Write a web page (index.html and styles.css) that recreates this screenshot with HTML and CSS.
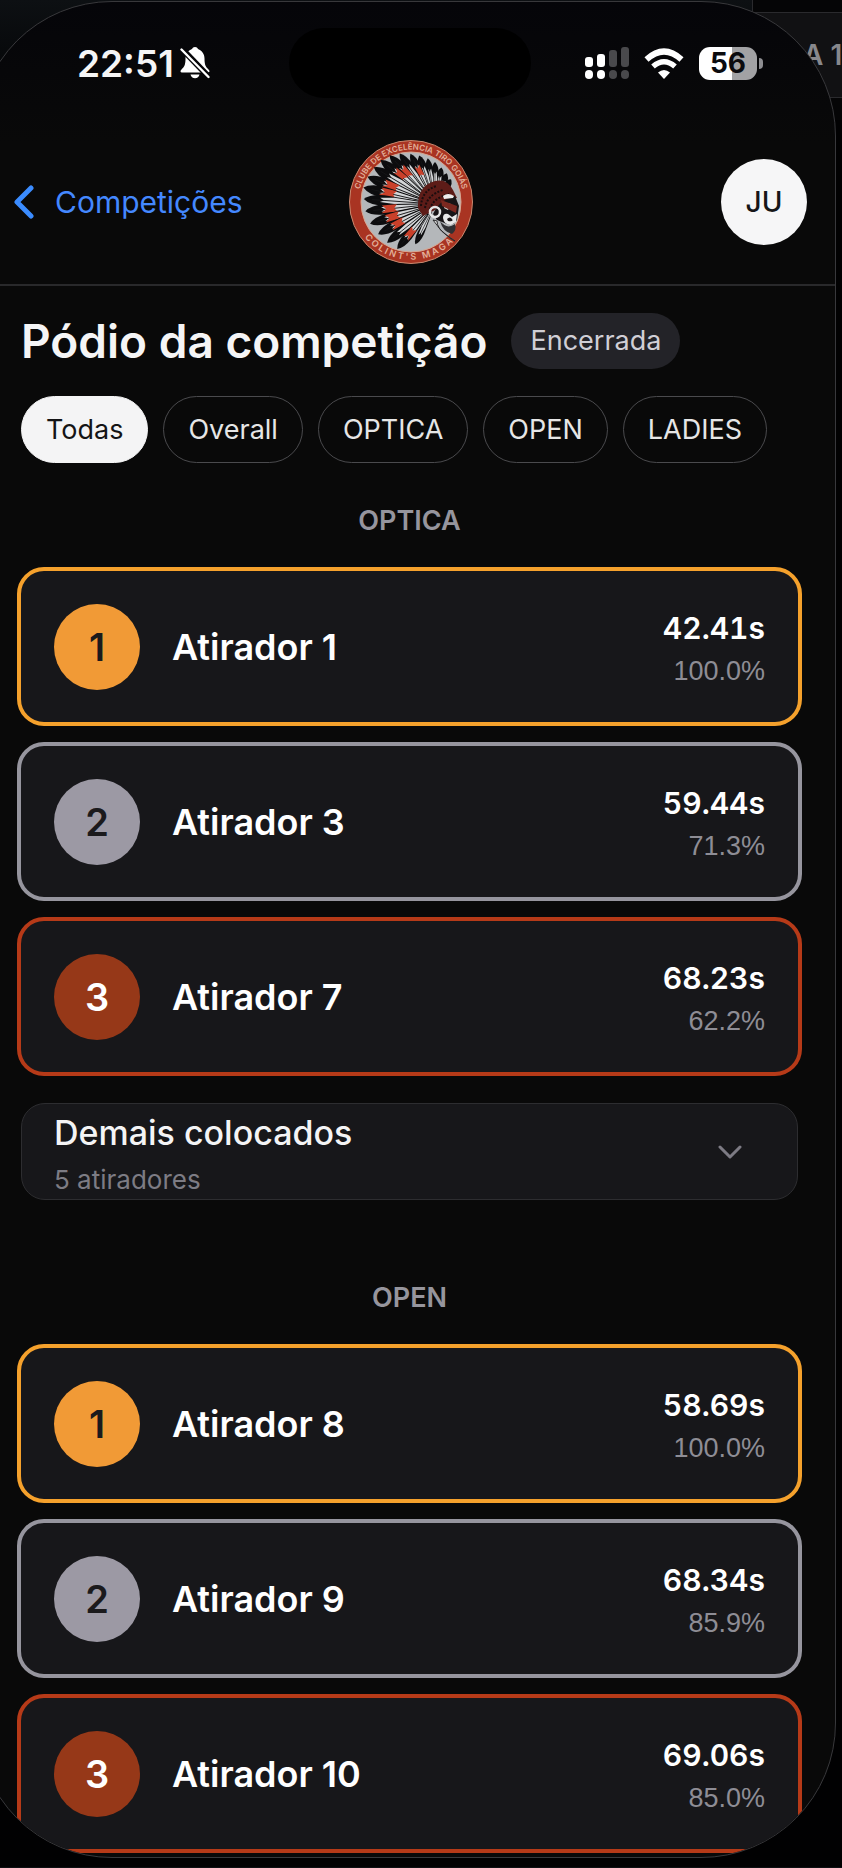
FILE: index.html
```
<!DOCTYPE html>
<html lang="pt-BR">
<head>
  <meta charset="UTF-8" />
  <meta name="viewport" content="width=device-width, initial-scale=1.0"/>
  <title>Pódio da competição</title>
  <link rel="stylesheet" href="styles.css">
</head>
<body>

<!-- Panel behind the phone -->
<div class="backdrop"><div class="backdrop-card">A 1</div></div>

<div class="phone">

  <!-- Status bar -->
  <div class="status-bar">
    <div class="status-time">
      <span>22:51</span>
      <svg width="30" height="32" viewBox="0 0 30 32">
        <path d="M15 0c-1.500 0-2.500.8-3 2C8 3.500 5.500 7 5.500 11.500c0 7-1.500 8.500-4 11-1.500 1.500-1.300 3 .5 3h26c1.800 0 2-1.500.5-3-2.500-2.500-4-4-4-11C24.500 7 22 3.500 18 2c-.5-1.200-1.500-2-3-2z" fill="#fff"/>
        <path d="M10.500 27.500h9c-.5 2.400-2.200 3.700-4.500 3.700s-4-1.300-4.500-3.700z" fill="#fff"/>
        <path d="M2 2l27 28" stroke="#050508" stroke-width="6"/>
        <path d="M1.500 2.500l27 27.500" stroke="#fff" stroke-width="2.400" stroke-linecap="round"/>
      </svg>
    </div>
    <div class="island"></div>
    <div class="status-icons">
      <svg width="44" height="32" viewBox="0 0 44 32">
        <g fill="#fff">
          <rect x="0" y="10" width="8" height="10" rx="3"/>
          <rect x="12" y="7" width="8" height="13" rx="3"/>
          <rect x="0" y="23" width="8" height="9" rx="4"/>
          <rect x="12" y="23" width="8" height="9" rx="4"/>
        </g>
        <g fill="#49494c">
          <rect x="24" y="3" width="8" height="17" rx="3"/>
          <rect x="36" y="0" width="8" height="20" rx="3"/>
          <rect x="24" y="23" width="8" height="9" rx="4"/>
          <rect x="36" y="23" width="8" height="9" rx="4"/>
        </g>
      </svg>
      <svg width="40" height="31" viewBox="0 0 40 31">
        <path d="M2.500 11.500Q20-4.500 37.500 11.500" fill="none" stroke="#fff" stroke-width="6"/>
        <path d="M9 18.500Q20 9 31 18.500" fill="none" stroke="#fff" stroke-width="5.500"/>
        <path d="M14 24.500Q20 19.500 26 24.500L20 31z" fill="#fff"/>
      </svg>
      <div class="battery"><span>56</span></div>
    </div>
  </div>

  <!-- App header -->
  <header class="header">
    <a class="back" href="#">
      <svg width="20" height="34" viewBox="0 0 20 34" fill="none" stroke="#3b8cff" stroke-width="5" stroke-linecap="round" stroke-linejoin="round"><path d="M17 3L3 17l14 14"/></svg>
      Competições
    </a>
    <svg class="logo" width="126" height="126" viewBox="-1 -1 126 126">
      <defs>
        <path id="ringTop" d="M9.500 68A52.800 52.800 0 1 1 114.500 68"/>
        <path id="ringBottom" d="M5 76A59 59 0 0 0 119 76"/>
        <g id="feather">
          <path d="M-14-1.800L-50-5.200Q-64-5.500-70 0Q-64 5.500-50 5.200L-14 1.800z" fill="#0c0c0e"/>
          <path d="M-16-1.200L-40-3.300-54-2.300-50 0-54 1.800-40 2.800-16 .8z" fill="#d3d5d7"/>
          <path d="M-16 0H-62" stroke="#151517" stroke-width=".9"/>
        </g>
        <g id="redFeather">
          <use href="#feather"/>
          <path d="M-38-3.800L-53-4-49 0-54 3.500-38 3.500-41 0z" fill="#c9402a"/>
        </g>
      </defs>
      <circle cx="62" cy="62" r="61.500" fill="#a93422" stroke="#c98a70" stroke-width="1"/>
      <circle cx="62" cy="62" r="50" fill="#b4b7ba" stroke="#d9a58f" stroke-width="1"/>
      <text class="logo-text"><textPath href="#ringTop" startOffset="50%" text-anchor="middle">CLUBE DE EXCELÊNCIA TIRO GOIÁS</textPath></text>
      <text class="logo-text logo-text-lg"><textPath href="#ringBottom" startOffset="48%" text-anchor="middle">C O L I N T ' S&#160;&#160; M A G A</textPath></text>
      <g transform="translate(86 64)">
        <use href="#feather" transform="rotate(123) scale(.42 .7)"/>
        <use href="#feather" transform="rotate(111) scale(.47 .7)"/>
        <use href="#feather" transform="rotate(100) scale(.53 .7)"/>
        <use href="#feather" transform="rotate(90) scale(.6 .7)"/>
        <use href="#feather" transform="rotate(81) scale(.66 .7)"/>
        <use href="#feather" transform="rotate(72) scale(.73 .8)"/>
        <use href="#redFeather" transform="rotate(64) scale(.8)"/>
        <use href="#feather" transform="rotate(55) scale(.88)"/>
        <use href="#redFeather" transform="rotate(47) scale(.95)"/>
        <use href="#redFeather" transform="rotate(39)"/>
        <use href="#feather" transform="rotate(31) scale(1.020)"/>
        <use href="#redFeather" transform="rotate(22) scale(1.040)"/>
        <use href="#redFeather" transform="rotate(13) scale(1.050)"/>
        <use href="#feather" transform="rotate(4) scale(1.020)"/>
        <use href="#redFeather" transform="rotate(-6)"/>
        <use href="#redFeather" transform="rotate(-17) scale(.97)"/>
        <use href="#redFeather" transform="rotate(-28) scale(.92)"/>
        <use href="#feather" transform="rotate(-39) scale(.88)"/>
        <use href="#redFeather" transform="rotate(-50) scale(.84)"/>
        <use href="#feather" transform="rotate(-64) scale(.64)"/>
      </g>
      <path d="M69 68Q68 46 86 41Q98 38 104 50L108 58 98 60 86 70 74 76z" fill="#5d1c18"/>
      <path d="M72 66Q73 50 88 46M76 68Q78 55 94 50M81 69Q84 58 100 54" fill="none" stroke="#1a0d0e" stroke-width="2" stroke-dasharray="2 1.500"/>
      <path d="M84 74Q90 60 106 56L110 66 108 80Q104 86 98 84L88 80z" fill="#171416"/>
      <circle cx="86" cy="72" r="5" fill="none" stroke="#e6e6e6" stroke-width="2.500"/>
      <path d="M94 56Q99 52 105 56L104 58 95 59z" fill="#ededed"/>
      <path d="M95 68Q97 62 102 64L99 70z" fill="#d9d9d9"/>
      <path d="M94 78Q94 73 99 74L103 77 108 74 107 82 102 85Q95 85 94 78z" fill="#e8e8e8"/>
      <path d="M98 79q3-3 5 0t-4 2z" fill="#1a1416"/>
      <path d="M92 60l16 6-1 7-14-7z" fill="#7b2820"/>
      <path d="M84 80Q90 90 102 99L106 101 96 94Q88 88 88 81z" fill="#eee" stroke="#2a2a2c" stroke-width="1"/>
      <path d="M91 81Q94 92 103 94Q108 90 106 84Q98 90 91 81z" fill="#303033"/>
    </svg>
    <button class="avatar" type="button">JU</button>
  </header>

  <main class="content">
    <div class="title-row">
      <h1>Pódio da competição</h1>
      <span class="badge">Encerrada</span>
    </div>

    <div class="filters">
      <button class="chip active" type="button">Todas</button>
      <button class="chip" type="button">Overall</button>
      <button class="chip" type="button">OPTICA</button>
      <button class="chip" type="button">OPEN</button>
      <button class="chip" type="button">LADIES</button>
    </div>

    <section class="podium">
      <h2>OPTICA</h2>
      <div class="card gold">
        <span class="rank">1</span>
        <span class="name">Atirador 1</span>
        <div class="score"><strong>42.41s</strong><span>100.0%</span></div>
      </div>
      <div class="card silver">
        <span class="rank">2</span>
        <span class="name">Atirador 3</span>
        <div class="score"><strong>59.44s</strong><span>71.3%</span></div>
      </div>
      <div class="card bronze">
        <span class="rank">3</span>
        <span class="name">Atirador 7</span>
        <div class="score"><strong>68.23s</strong><span>62.2%</span></div>
      </div>
      <button class="others" type="button">
        <span class="others-text">
          <span class="others-title">Demais colocados</span>
          <span class="others-count">5 atiradores</span>
        </span>
        <svg width="24" height="14" viewBox="0 0 24 14" fill="none" stroke="#7d7b84" stroke-width="3" stroke-linecap="round" stroke-linejoin="round"><path d="M2 2l10 10L22 2"/></svg>
      </button>
    </section>

    <section class="podium">
      <h2>OPEN</h2>
      <div class="card gold">
        <span class="rank">1</span>
        <span class="name">Atirador 8</span>
        <div class="score"><strong>58.69s</strong><span>100.0%</span></div>
      </div>
      <div class="card silver">
        <span class="rank">2</span>
        <span class="name">Atirador 9</span>
        <div class="score"><strong>68.34s</strong><span>85.9%</span></div>
      </div>
      <div class="card bronze">
        <span class="rank">3</span>
        <span class="name">Atirador 10</span>
        <div class="score"><strong>69.06s</strong><span>85.0%</span></div>
      </div>
    </section>
  </main>
</div>

</body>
</html>
```
FILE: styles.css
```
* {
  box-sizing: border-box;
}

body {
  margin: 0;
  padding: 1px 0 9px;
  background: linear-gradient(#0d1013, #010102 120px);
  color: #f5f5f6;
  font-family: Inter, "Liberation Sans", sans-serif;
  overflow-x: hidden;
}

button {
  font-family: inherit;
  cursor: pointer;
}

.backdrop {
  position: absolute;
  top: 0;
  right: 0;
  width: 90px;
  height: 120px;
  padding-top: 12px;
  background: #050506;
  border-left: 1px solid #2a2a2d;
  overflow: hidden;
}

.backdrop-card {
  height: 86px;
  padding-left: 50px;
  background: #111113;
  border-top: 1px solid #2a2a2d;
  border-bottom: 1px solid #2a2a2d;
  color: #88888c;
  font-size: 28px;
  font-weight: 600;
  line-height: 84px;
  white-space: nowrap;
}

/* the phone is wider than the window on the left side */
.phone {
  position: relative;
  margin: 0 6px 0 -23px;
  border: 1px solid #38383b;
  border-radius: 135px;
  background: linear-gradient(#050509, #090909 140px);
  overflow: hidden;
}

.status-bar {
  display: grid;
  grid-template-columns: 1fr auto 1fr;
  align-items: center;
  padding: 26px 16px 22px 22px;
}

.status-time {
  display: flex;
  align-items: center;
  gap: 6px;
  padding-left: 77px;
  font-size: 37px;
  font-weight: 600;
}

.island {
  width: 242px;
  height: 70px;
  border-radius: 35px;
  background: #000;
}

.status-icons {
  display: flex;
  align-items: center;
  justify-content: flex-end;
  gap: 15px;
  padding-right: 62px;
}

.battery {
  position: relative;
  width: 58px;
  height: 33px;
  border-radius: 11px;
  background: linear-gradient(90deg, #fff 57%, #a2a2a4 57%);
  color: #0b0b0e;
  font-size: 28px;
  font-weight: 700;
  line-height: 33px;
  text-align: center;
}

.battery::after {
  content: "";
  position: absolute;
  right: -6px;
  top: 11px;
  width: 4px;
  height: 11px;
  border-radius: 0 4px 4px 0;
  background: #8e8e91;
}

.header {
  display: grid;
  grid-template-columns: 1fr auto 1fr;
  align-items: center;
  height: 166px;
  padding: 0 28px 0 36px;
  border-bottom: 2px solid #29292b;
}

.back {
  display: flex;
  align-items: center;
  gap: 21px;
  color: #4488ff;
  font-size: 30px;
  text-decoration: none;
}

.logo-text {
  fill: #e3b09a;
  font-size: 8px;
  font-weight: 600;
}

.logo-text-lg {
  font-size: 9px;
}

.avatar {
  justify-self: end;
  width: 86px;
  height: 86px;
  padding: 0;
  border: none;
  border-radius: 50%;
  background: #f6f6f7;
  color: #161618;
  font-size: 28px;
  font-weight: 500;
}

.content {
  padding: 27px 33px 4px 39px;
}

.title-row {
  display: flex;
  align-items: center;
  gap: 24px;
  padding: 0 4px;
}

h1 {
  margin: 0;
  font-size: 46px;
  font-weight: 600;
  line-height: 56px;
}

.badge {
  padding: 0 19px;
  border-radius: 28px;
  background: #232328;
  color: #d0cfd6;
  font-size: 27px;
  line-height: 56px;
}

.filters {
  display: flex;
  gap: 15px;
  margin-top: 27px;
  padding: 0 4px;
}

.chip {
  height: 67px;
  padding: 0 24px;
  border: 1px solid #4a4a4d;
  border-radius: 34px;
  background: transparent;
  color: #e6e6e6;
  font-size: 27px;
}

.chip.active {
  border-color: #f4f4f5;
  background: #f4f4f5;
  color: #141416;
}

.podium {
  display: flex;
  flex-direction: column;
  gap: 16px;
  margin-top: 38px;
}

.podium + .podium {
  margin-top: 78px;
}

h2 {
  margin: 0 0 10px;
  color: #96959d;
  font-size: 27px;
  font-weight: 600;
  line-height: 40px;
  text-align: center;
}

.card {
  display: flex;
  align-items: center;
  height: 159px;
  padding: 0 33px;
  border: 4px solid;
  border-radius: 27px;
  background: #17171a;
}

.rank {
  flex: none;
  width: 86px;
  border-radius: 50%;
  color: #1b1a1c;
  font-size: 38px;
  font-weight: 600;
  line-height: 86px;
  text-align: center;
}

.name {
  flex: 1;
  padding-left: 32px;
  color: #fff;
  font-size: 36px;
  font-weight: 600;
}

.score {
  display: flex;
  flex-direction: column;
  align-items: flex-end;
  padding-top: 7px;
  font-variant-numeric: tabular-nums;
}

.score strong {
  color: #fff;
  font-size: 30px;
  font-weight: 600;
  line-height: 43px;
}

.score span {
  color: #8e8d95;
  font-family: "Liberation Sans", Arial, sans-serif;
  font-size: 27px;
  line-height: 43px;
}

.gold {
  border-color: #f5a12c;
}

.gold .rank {
  background: #f19a36;
}

.silver {
  border-color: #96959e;
}

.silver .rank {
  background: #9c99a4;
}

.bronze {
  border-color: #b63a18;
}

.bronze .rank {
  background: #963818;
  color: #fff;
}

.others {
  display: flex;
  align-items: center;
  justify-content: space-between;
  height: 97px;
  margin: 11px 4px 0;
  padding: 0 55px 0 32px;
  border: 1px solid #2d2d30;
  border-radius: 24px;
  background: #17171a;
  text-align: left;
}

.others-text {
  display: flex;
  flex-direction: column;
  padding-top: 9px;
}

.others-title {
  color: #f4f4f5;
  font-size: 34px;
  font-weight: 500;
  line-height: 48px;
}

.others-count {
  color: #7d7c84;
  font-size: 26px;
  line-height: 46px;
}
```
